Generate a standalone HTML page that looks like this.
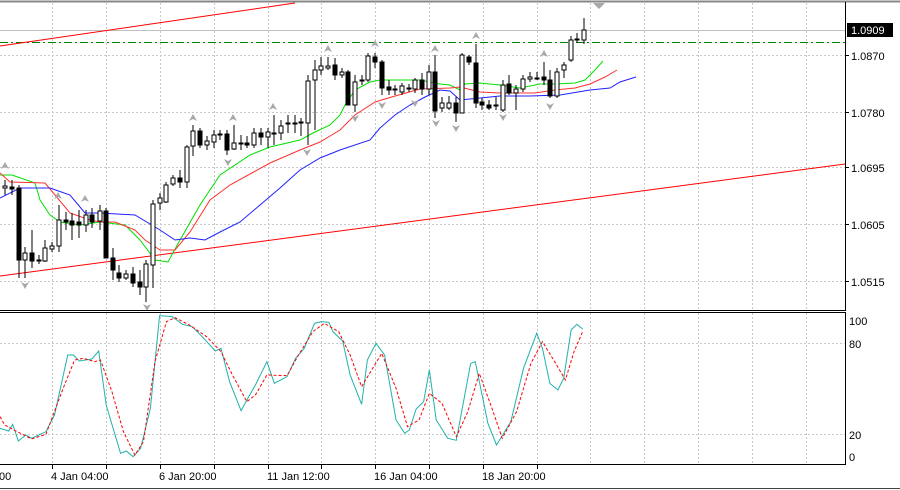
<!DOCTYPE html>
<html><head><meta charset="utf-8"><style>
html,body{margin:0;padding:0;background:#fff;width:900px;height:490px;overflow:hidden}
svg{display:block}
text{font-family:"Liberation Sans",sans-serif;font-size:11px;fill:#000}
.c line{stroke:#000;stroke-width:1}
.c rect{stroke:#000;stroke-width:1}
.w{fill:#fff}.b{fill:#000}
</style></head><body>
<svg width="900" height="490" viewBox="0 0 900 490" xmlns="http://www.w3.org/2000/svg">
<rect width="900" height="490" fill="#fff"/>
<line x1="0" y1="1.5" x2="900" y2="1.5" stroke="#888" stroke-width="2"/>
<g stroke="#c8c8c8" stroke-dasharray="2,2" stroke-width="1">
<line x1="52.5" y1="3" x2="52.5" y2="310"/><line x1="106.5" y1="3" x2="106.5" y2="310"/><line x1="160.5" y1="3" x2="160.5" y2="310"/><line x1="214.5" y1="3" x2="214.5" y2="310"/><line x1="268.5" y1="3" x2="268.5" y2="310"/><line x1="321.5" y1="3" x2="321.5" y2="310"/><line x1="375.5" y1="3" x2="375.5" y2="310"/><line x1="429.5" y1="3" x2="429.5" y2="310"/><line x1="483.5" y1="3" x2="483.5" y2="310"/><line x1="537.5" y1="3" x2="537.5" y2="310"/><line x1="590.5" y1="3" x2="590.5" y2="310"/><line x1="644.5" y1="3" x2="644.5" y2="310"/><line x1="698.5" y1="3" x2="698.5" y2="310"/><line x1="752.5" y1="3" x2="752.5" y2="310"/><line x1="806.5" y1="3" x2="806.5" y2="310"/>
<line x1="0" y1="55.5" x2="845" y2="55.5"/><line x1="0" y1="112.5" x2="845" y2="112.5"/><line x1="0" y1="167.5" x2="845" y2="167.5"/><line x1="0" y1="224.5" x2="845" y2="224.5"/><line x1="0" y1="281.5" x2="845" y2="281.5"/>
</g>
<line x1="0" y1="30.5" x2="845" y2="30.5" stroke="#c0c0c0"/>
<line x1="0" y1="42.5" x2="845" y2="42.5" stroke="#008000" stroke-dasharray="8,3,2,3"/>
<line x1="0" y1="46" x2="295" y2="3" stroke="#f00"/>
<line x1="0" y1="276" x2="845" y2="164" stroke="#f00"/>
<polyline fill="none" stroke="#00e000" points="0,175 12,175 35,183 40,200 50,215 60,222 80,225 100,222 125,225 140,240 155,260 168,262 180,240 200,205 220,175 250,155 270,147 300,140 315,132 330,125 340,115 345,105 355,90 370,82 380,80 395,80 420,80 440,84 450,85 460,90 465,84 480,83 500,85 520,88 540,84 555,84 575,83 585,80 595,70 603,61"/>
<polyline fill="none" stroke="#ff3030" points="0,173 10,182 45,183 55,195 70,213 90,220 100,222 115,222 135,230 145,240 160,250 175,250 190,232 210,200 230,185 270,163 300,150 320,142 340,130 355,115 375,102 395,96 420,89 450,88 460,87 480,92 500,93 520,93 535,93 555,90 575,88 590,84 605,77 617,70"/>
<polyline fill="none" stroke="#2020ff" points="0,198 20,188 50,188 70,195 85,213 100,213 135,215 160,230 175,240 190,238 205,240 220,232 240,222 260,205 280,188 300,170 320,158 340,150 370,140 380,128 395,115 410,105 425,97 440,90 450,91 460,100 480,98 500,96 530,96 560,95 590,90 610,88 620,82 636,77"/>
<g class="c">
<line x1="5" y1="180" x2="5" y2="195"/><rect class="w" x="3" y="186" width="4" height="2"/>
<line x1="12" y1="180" x2="12" y2="195"/><rect class="b" x="10" y="187" width="4" height="2"/>
<line x1="19" y1="185" x2="19" y2="278"/><rect class="b" x="17" y="188" width="4" height="72"/>
<line x1="25" y1="247" x2="25" y2="278"/><rect class="w" x="23" y="253" width="4" height="7"/>
<line x1="32" y1="230" x2="32" y2="268"/><rect class="b" x="30" y="253" width="4" height="8"/>
<line x1="39" y1="255" x2="39" y2="264"/><rect class="w" x="37" y="260" width="4" height="1"/>
<line x1="45" y1="240" x2="45" y2="262"/><rect class="w" x="43" y="248" width="4" height="13"/>
<line x1="52" y1="242" x2="52" y2="252"/><rect class="w" x="50" y="246" width="4" height="3"/>
<line x1="59" y1="205" x2="59" y2="252"/><rect class="w" x="57" y="220" width="4" height="26"/>
<line x1="66" y1="212" x2="66" y2="230"/><rect class="b" x="64" y="220" width="4" height="2"/>
<line x1="72" y1="213" x2="72" y2="240"/><rect class="b" x="70" y="221" width="4" height="4"/>
<line x1="79" y1="210" x2="79" y2="238"/><rect class="b" x="77" y="222" width="4" height="3"/>
<line x1="86" y1="210" x2="86" y2="232"/><rect class="w" x="84" y="215" width="4" height="10"/>
<line x1="92" y1="208" x2="92" y2="228"/><rect class="b" x="90" y="215" width="4" height="7"/>
<line x1="100" y1="205" x2="100" y2="230"/><rect class="w" x="98" y="211" width="4" height="10"/>
<line x1="106" y1="208" x2="106" y2="258"/><rect class="b" x="104" y="211" width="4" height="47"/>
<line x1="113" y1="248" x2="113" y2="280"/><rect class="b" x="111" y="258" width="4" height="12"/>
<line x1="119" y1="265" x2="119" y2="282"/><rect class="b" x="117" y="273" width="4" height="5"/>
<line x1="126" y1="270" x2="126" y2="280"/><rect class="w" x="124" y="274" width="4" height="4"/>
<line x1="133" y1="267" x2="133" y2="287"/><rect class="b" x="131" y="274" width="4" height="9"/>
<line x1="140" y1="270" x2="140" y2="295"/><rect class="b" x="138" y="282" width="4" height="5"/>
<line x1="146" y1="260" x2="146" y2="302"/><rect class="w" x="144" y="264" width="4" height="23"/>
<line x1="153" y1="200" x2="153" y2="288"/><rect class="w" x="151" y="204" width="4" height="61"/>
<line x1="160" y1="193" x2="160" y2="210"/><rect class="w" x="158" y="198" width="4" height="5"/>
<line x1="166" y1="182" x2="166" y2="203"/><rect class="w" x="164" y="185" width="4" height="17"/>
<line x1="173" y1="175" x2="173" y2="186"/><rect class="w" x="171" y="178" width="4" height="6"/>
<line x1="180" y1="170" x2="180" y2="188"/><rect class="b" x="178" y="178" width="4" height="4"/>
<line x1="187" y1="145" x2="187" y2="188"/><rect class="w" x="185" y="147" width="4" height="35"/>
<line x1="193" y1="125" x2="193" y2="156"/><rect class="w" x="191" y="131" width="4" height="15"/>
<line x1="200" y1="128" x2="200" y2="148"/><rect class="b" x="198" y="131" width="4" height="14"/>
<line x1="207" y1="136" x2="207" y2="150"/><rect class="w" x="205" y="141" width="4" height="4"/>
<line x1="214" y1="130" x2="214" y2="148"/><rect class="w" x="212" y="135" width="4" height="7"/>
<line x1="220" y1="130" x2="220" y2="140"/><rect class="w" x="218" y="134" width="4" height="1"/>
<line x1="227" y1="130" x2="227" y2="155"/><rect class="b" x="225" y="134" width="4" height="16"/>
<line x1="234" y1="125" x2="234" y2="150"/><rect class="w" x="232" y="143" width="4" height="6"/>
<line x1="241" y1="135" x2="241" y2="150"/><rect class="b" x="239" y="143" width="4" height="1"/>
<line x1="247" y1="136" x2="247" y2="148"/><rect class="b" x="245" y="143" width="4" height="2"/>
<line x1="254" y1="128" x2="254" y2="148"/><rect class="w" x="252" y="133" width="4" height="12"/>
<line x1="261" y1="128" x2="261" y2="145"/><rect class="b" x="259" y="133" width="4" height="4"/>
<line x1="268" y1="128" x2="268" y2="148"/><rect class="w" x="266" y="132" width="4" height="5"/>
<line x1="274" y1="115" x2="274" y2="145"/><rect class="w" x="272" y="133" width="4" height="1"/>
<line x1="281" y1="120" x2="281" y2="140"/><rect class="w" x="279" y="126" width="4" height="7"/>
<line x1="288" y1="115" x2="288" y2="133"/><rect class="b" x="286" y="123" width="4" height="1"/>
<line x1="295" y1="115" x2="295" y2="133"/><rect class="w" x="293" y="123" width="4" height="1"/>
<line x1="301" y1="118" x2="301" y2="136"/><rect class="w" x="299" y="122" width="4" height="1"/>
<line x1="308" y1="75" x2="308" y2="145"/><rect class="w" x="306" y="81" width="4" height="42"/>
<line x1="315" y1="60" x2="315" y2="130"/><rect class="w" x="313" y="70" width="4" height="10"/>
<line x1="321" y1="57" x2="321" y2="75"/><rect class="w" x="319" y="66" width="4" height="4"/>
<line x1="328" y1="57" x2="328" y2="70"/><rect class="w" x="326" y="66" width="4" height="2"/>
<line x1="335" y1="58" x2="335" y2="80"/><rect class="b" x="333" y="65" width="4" height="10"/>
<line x1="342" y1="68" x2="342" y2="78"/><rect class="w" x="340" y="72" width="4" height="3"/>
<line x1="348" y1="70" x2="348" y2="105"/><rect class="b" x="346" y="72" width="4" height="33"/>
<line x1="355" y1="75" x2="355" y2="112"/><rect class="w" x="353" y="82" width="4" height="23"/>
<line x1="362" y1="75" x2="362" y2="85"/><rect class="w" x="360" y="80" width="4" height="1"/>
<line x1="368" y1="53" x2="368" y2="82"/><rect class="w" x="366" y="56" width="4" height="24"/>
<line x1="375" y1="53" x2="375" y2="68"/><rect class="b" x="373" y="57" width="4" height="5"/>
<line x1="382" y1="60" x2="382" y2="95"/><rect class="b" x="380" y="62" width="4" height="26"/>
<line x1="389" y1="80" x2="389" y2="95"/><rect class="b" x="387" y="87" width="4" height="3"/>
<line x1="395" y1="85" x2="395" y2="95"/><rect class="w" x="393" y="89" width="4" height="1"/>
<line x1="402" y1="83" x2="402" y2="95"/><rect class="w" x="400" y="86" width="4" height="6"/>
<line x1="409" y1="84" x2="409" y2="92"/><rect class="w" x="407" y="88" width="4" height="1"/>
<line x1="415" y1="78" x2="415" y2="93"/><rect class="w" x="413" y="80" width="4" height="9"/>
<line x1="422" y1="73" x2="422" y2="95"/><rect class="b" x="420" y="80" width="4" height="9"/>
<line x1="429" y1="65" x2="429" y2="95"/><rect class="w" x="427" y="72" width="4" height="17"/>
<line x1="435" y1="55" x2="435" y2="118"/><rect class="b" x="433" y="72" width="4" height="39"/>
<line x1="442" y1="97" x2="442" y2="112"/><rect class="w" x="440" y="103" width="4" height="5"/>
<line x1="449" y1="96" x2="449" y2="110"/><rect class="w" x="447" y="103" width="4" height="5"/>
<line x1="456" y1="97" x2="456" y2="122"/><rect class="b" x="454" y="103" width="4" height="10"/>
<line x1="462" y1="53" x2="462" y2="113"/><rect class="w" x="460" y="55" width="4" height="58"/>
<line x1="469" y1="55" x2="469" y2="65"/><rect class="b" x="467" y="57" width="4" height="5"/>
<line x1="476" y1="44" x2="476" y2="108"/><rect class="b" x="474" y="63" width="4" height="40"/>
<line x1="482" y1="98" x2="482" y2="110"/><rect class="b" x="480" y="102" width="4" height="3"/>
<line x1="489" y1="100" x2="489" y2="110"/><rect class="b" x="487" y="105" width="4" height="3"/>
<line x1="496" y1="97" x2="496" y2="110"/><rect class="w" x="494" y="105" width="4" height="1"/>
<line x1="503" y1="80" x2="503" y2="112"/><rect class="w" x="501" y="85" width="4" height="25"/>
<line x1="509" y1="75" x2="509" y2="95"/><rect class="b" x="507" y="84" width="4" height="9"/>
<line x1="516" y1="85" x2="516" y2="110"/><rect class="w" x="514" y="89" width="4" height="4"/>
<line x1="523" y1="75" x2="523" y2="92"/><rect class="w" x="521" y="79" width="4" height="10"/>
<line x1="530" y1="72" x2="530" y2="82"/><rect class="w" x="528" y="77" width="4" height="2"/>
<line x1="537" y1="72" x2="537" y2="80"/><rect class="w" x="535" y="78" width="4" height="1"/>
<line x1="544" y1="62" x2="544" y2="85"/><rect class="b" x="542" y="77" width="4" height="3"/>
<line x1="550" y1="70" x2="550" y2="98"/><rect class="b" x="548" y="80" width="4" height="16"/>
<line x1="557" y1="68" x2="557" y2="98"/><rect class="w" x="555" y="72" width="4" height="24"/>
<line x1="564" y1="62" x2="564" y2="78"/><rect class="w" x="562" y="65" width="4" height="5"/>
<line x1="571" y1="36" x2="571" y2="62"/><rect class="w" x="569" y="40" width="4" height="20"/>
<line x1="577" y1="33" x2="577" y2="43"/><rect class="b" x="575" y="39" width="4" height="1"/>
<line x1="584" y1="18" x2="584" y2="44"/><rect class="w" x="582" y="30" width="4" height="10"/>
</g>
<g fill="#a8a8a8">
<path d="M5,162 l-4,7 l4,-2 l4,2z"/><path d="M58,192 l-4,7 l4,-2 l4,2z"/><path d="M85,195 l-4,7 l4,-2 l4,2z"/><path d="M193,114 l-4,7 l4,-2 l4,2z"/><path d="M233,114 l-4,7 l4,-2 l4,2z"/><path d="M273,103 l-4,7 l4,-2 l4,2z"/><path d="M328,45 l-4,7 l4,-2 l4,2z"/><path d="M375,40 l-4,7 l4,-2 l4,2z"/><path d="M435,45 l-4,7 l4,-2 l4,2z"/><path d="M476,32 l-4,7 l4,-2 l4,2z"/><path d="M544,50 l-4,7 l4,-2 l4,2z"/>
<path d="M25,289 l-4,-7 l4,2 l4,-2z"/><path d="M147,311 l-4,-7 l4,2 l4,-2z"/><path d="M228,166 l-4,-7 l4,2 l4,-2z"/><path d="M307,156 l-4,-7 l4,2 l4,-2z"/><path d="M355,122 l-4,-7 l4,2 l4,-2z"/><path d="M382,109 l-4,-7 l4,2 l4,-2z"/><path d="M415,107 l-4,-7 l4,2 l4,-2z"/><path d="M436,127 l-4,-7 l4,2 l4,-2z"/><path d="M456,132 l-4,-7 l4,2 l4,-2z"/><path d="M503,121 l-4,-7 l4,2 l4,-2z"/><path d="M550,110 l-4,-7 l4,2 l4,-2z"/>
<path d="M593,3 h12 l-6,6z"/>
</g>
<line x1="845.5" y1="2" x2="845.5" y2="311" stroke="#000"/>
<line x1="0" y1="310.5" x2="846" y2="310.5" stroke="#000"/>
<line x1="0" y1="312.5" x2="846" y2="312.5" stroke="#000"/>
<line x1="845.5" y1="312" x2="845.5" y2="465" stroke="#000"/>
<line x1="0" y1="464.5" x2="846" y2="464.5" stroke="#000"/>
<line x1="0" y1="488.5" x2="900" y2="488.5" stroke="#444"/>
<g>
<line x1="845" y1="55.5" x2="849" y2="55.5" stroke="#000"/><text x="851" y="60">1.0870</text>
<line x1="845" y1="112.5" x2="849" y2="112.5" stroke="#000"/><text x="851" y="117">1.0780</text>
<line x1="845" y1="167.5" x2="849" y2="167.5" stroke="#000"/><text x="851" y="172">1.0695</text>
<line x1="845" y1="224.5" x2="849" y2="224.5" stroke="#000"/><text x="851" y="229">1.0605</text>
<line x1="845" y1="281.5" x2="849" y2="281.5" stroke="#000"/><text x="851" y="286">1.0515</text>
<rect x="847" y="23" width="46" height="14" fill="#000"/><text x="851" y="34" style="fill:#fff">1.0909</text>
</g>
<g stroke="#c8c8c8" stroke-dasharray="2,2">
<line x1="0" y1="343.5" x2="845" y2="343.5"/><line x1="0" y1="434.5" x2="845" y2="434.5"/>
<line x1="52.5" y1="313" x2="52.5" y2="464"/><line x1="106.5" y1="313" x2="106.5" y2="464"/><line x1="160.5" y1="313" x2="160.5" y2="464"/><line x1="214.5" y1="313" x2="214.5" y2="464"/><line x1="268.5" y1="313" x2="268.5" y2="464"/><line x1="321.5" y1="313" x2="321.5" y2="464"/><line x1="375.5" y1="313" x2="375.5" y2="464"/><line x1="429.5" y1="313" x2="429.5" y2="464"/><line x1="483.5" y1="313" x2="483.5" y2="464"/><line x1="537.5" y1="313" x2="537.5" y2="464"/><line x1="590.5" y1="313" x2="590.5" y2="464"/><line x1="644.5" y1="313" x2="644.5" y2="464"/><line x1="698.5" y1="313" x2="698.5" y2="464"/><line x1="752.5" y1="313" x2="752.5" y2="464"/><line x1="806.5" y1="313" x2="806.5" y2="464"/>
</g>
<text x="849" y="325">100</text><text x="849" y="348">80</text><text x="849" y="439">20</text><text x="849" y="461">0</text>
<g transform="translate(0,305) scale(0.574,0.3333)">
<polyline fill="none" stroke="#20b2aa" stroke-width="1" vector-effect="non-scaling-stroke" points="0,370 15,378 22,358 32,408 45,390 55,400 80,380 95,330 118,150 128,150 138,168 160,162 172,138 185,300 210,445 220,438 232,455 245,430 262,310 278,32 300,35 318,58 335,65 355,100 375,138 385,130 400,230 420,317 435,270 445,240 465,170 478,235 500,215 515,160 530,130 548,55 560,50 573,52 580,80 597,108 610,210 630,298 640,165 655,115 670,150 690,345 705,385 713,375 725,312 738,290 748,195 760,345 780,400 795,406 820,175 828,170 850,355 865,420 890,350 912,190 935,85 945,130 958,235 972,255 982,220 995,75 1005,58 1015,72"/>
<polyline fill="none" stroke="#ff0000" stroke-width="1" stroke-dasharray="3,2" vector-effect="non-scaling-stroke" points="0,335 8,360 30,380 55,402 80,388 110,250 130,165 145,160 165,170 175,165 195,260 215,380 235,450 250,410 270,170 290,50 305,38 330,60 360,95 385,140 405,210 430,290 445,270 465,210 500,212 520,150 545,80 565,55 590,80 610,150 630,245 665,145 690,250 710,365 730,345 748,265 770,295 795,395 815,320 835,205 855,300 875,400 900,320 925,175 945,110 968,175 985,225 1000,140 1015,80"/>
</g>
<g stroke="#000">
<line x1="52.5" y1="465" x2="52.5" y2="469"/><line x1="106.5" y1="465" x2="106.5" y2="469"/><line x1="160.5" y1="465" x2="160.5" y2="469"/><line x1="214.5" y1="465" x2="214.5" y2="469"/><line x1="268.5" y1="465" x2="268.5" y2="469"/><line x1="321.5" y1="465" x2="321.5" y2="469"/><line x1="375.5" y1="465" x2="375.5" y2="469"/><line x1="429.5" y1="465" x2="429.5" y2="469"/><line x1="483.5" y1="465" x2="483.5" y2="469"/><line x1="537.5" y1="465" x2="537.5" y2="469"/>
</g>
<text x="-1" y="480">00</text><text x="51" y="480">4 Jan 04:00</text><text x="159" y="480">6 Jan 20:00</text><text x="267" y="480">11 Jan 12:00</text><text x="374" y="480">16 Jan 04:00</text><text x="482" y="480">18 Jan 20:00</text>
</svg>
</body></html>
